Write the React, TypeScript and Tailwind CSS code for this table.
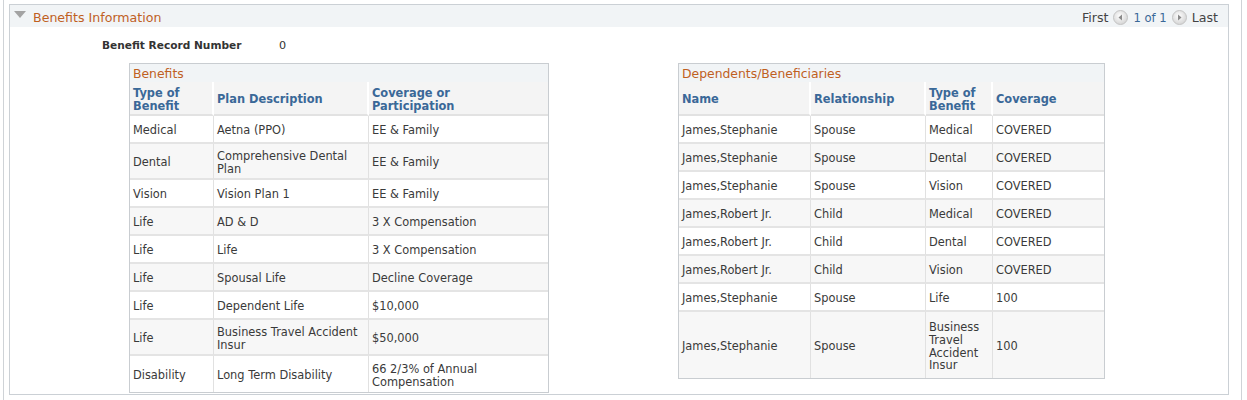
import React from 'react';

const font = { fontFamily: '"DejaVu Sans", Verdana, sans-serif' };

type Row = { h: number; cells: string[] };

const benefitRows: Row[] = [
  { h: 28, cells: ['Medical', 'Aetna (PPO)', 'EE & Family'] },
  { h: 36, cells: ['Dental', 'Comprehensive Dental Plan', 'EE & Family'] },
  { h: 28, cells: ['Vision', 'Vision Plan 1', 'EE & Family'] },
  { h: 28, cells: ['Life', 'AD & D', '3 X Compensation'] },
  { h: 28, cells: ['Life', 'Life', '3 X Compensation'] },
  { h: 28, cells: ['Life', 'Spousal Life', 'Decline Coverage'] },
  { h: 28, cells: ['Life', 'Dependent Life', '$10,000'] },
  { h: 36, cells: ['Life', 'Business Travel Accident Insur', '$50,000'] },
  { h: 36, cells: ['Disability', 'Long Term Disability', '66 2/3% of Annual Compensation'] },
];

const dependentRows: Row[] = [
  { h: 28, cells: ['James,Stephanie', 'Spouse', 'Medical', 'COVERED'] },
  { h: 28, cells: ['James,Stephanie', 'Spouse', 'Dental', 'COVERED'] },
  { h: 28, cells: ['James,Stephanie', 'Spouse', 'Vision', 'COVERED'] },
  { h: 28, cells: ['James,Robert Jr.', 'Child', 'Medical', 'COVERED'] },
  { h: 28, cells: ['James,Robert Jr.', 'Child', 'Dental', 'COVERED'] },
  { h: 28, cells: ['James,Robert Jr.', 'Child', 'Vision', 'COVERED'] },
  { h: 28, cells: ['James,Stephanie', 'Spouse', 'Life', '100'] },
  { h: 66, cells: ['James,Stephanie', 'Spouse', 'Business Travel Accident Insur', '100'] },
];

function NavButton({ dir }: { dir: 'left' | 'right' }) {
  return (
    <svg width="15" height="15" viewBox="0 0 15 15" className="mx-[5px] mt-[-3px]">
      <defs>
        <radialGradient id={`g-${dir}`} cx="45%" cy="40%" r="60%">
          <stop offset="0%" stopColor="#ffffff" />
          <stop offset="100%" stopColor="#d4d4d4" />
        </radialGradient>
      </defs>
      <circle cx="7.5" cy="7.5" r="7" fill={`url(#g-${dir})`} stroke="#c4c4c4" />
      {dir === 'left' ? (
        <path d="M9 4.5 L5.5 7.5 L9 10.5 Z" fill="#8a8a8a" />
      ) : (
        <path d="M6 4.5 L9.5 7.5 L6 10.5 Z" fill="#8a8a8a" />
      )}
    </svg>
  );
}

function DataGrid({
  title,
  cols,
  headers,
  rows,
  width,
}: {
  title: string;
  cols: string;
  headers: string[];
  rows: Row[];
  width: string;
}) {
  const n = headers.length;
  return (
    <div className={`${width} border border-[#c9cdd1] bg-white`}>
      <div className="h-[18px] bg-[#f1f4f6] px-[3px] pt-[1px] text-[12.4px] leading-[18px] text-[#c0601f]">{title}</div>
      <div className={`grid ${cols}`}>
        {headers.map((h, i) => (
          <div
            key={h}
            className={`flex h-[34px] items-center whitespace-pre-line border-b-2 border-b-[#e2e2e2] bg-[#f4f4f4] px-[3px] pt-[3px] text-[11.4px] font-bold leading-[13px] text-[#3a6898] ${
              i < n - 1 ? 'border-r-2 border-r-[#ffffff]' : ''
            }`}
          >
            {h}
          </div>
        ))}
        {rows.map((r, ri) =>
          r.cells.map((c, ci) => (
            <div
              key={`${ri}-${ci}`}
              style={{ height: r.h }}
              className={`flex items-center px-[3px] pt-[3px] text-[11.4px] leading-[12.8px] text-[#3a3a3a] ${
                ri % 2 === 1 ? 'bg-[#f7f7f7]' : 'bg-white'
              } ${ri < rows.length - 1 ? 'border-b-2 border-b-[#e4e4e4]' : ''} ${
                ci < n - 1 ? 'border-r border-r-[#e1e1e1]' : ''
              }`}
            >
              {c}
            </div>
          )),
        )}
      </div>
    </div>
  );
}

export default function App() {
  return (
    <div className="h-[400px] w-[1247px] bg-white" style={font}>
      <div className="ml-[3px] h-full w-[1239px] border-x border-[#cfd3d7] pl-[5px] pt-[4px]">
        <div className="h-[391px] w-[1220px] border border-[#cbd0d5]">
          <div className="flex h-[22px] items-center justify-between bg-[#f1f4f6] pt-[5px]">
            <div className="flex items-center">
              <svg width="12" height="7" viewBox="0 0 12 7" className="ml-[4px] mr-[7px] mt-[-8px]">
                <path d="M0 0 L12 0 L6 7 Z" fill="#a3a3a3" />
              </svg>
              <span className="text-[12.6px] text-[#c0601f]">Benefits Information</span>
            </div>
            <div className="mr-[10px] flex items-center text-[12.6px] text-[#444444]">
              <span>First</span>
              <NavButton dir="left" />
              <span className="text-[11.6px] text-[#3a6898]">1 of 1</span>
              <NavButton dir="right" />
              <span>Last</span>
            </div>
          </div>
          <div className="pt-[12px]">
            <div className="flex h-[14px] items-center">
              <span className="ml-[92px] w-[177px] text-[10.6px] font-bold text-[#333333]">Benefit Record Number</span>
              <span className="text-[11.2px] text-[#333333]">0</span>
            </div>
            <div className="mt-[10px] flex items-start">
              <div className="ml-[119px]">
                <DataGrid
                  title="Benefits"
                  width="w-[420px]"
                  cols="grid-cols-[84px_155px_179px]"
                  headers={['Type of Benefit', 'Plan Description', 'Coverage or\nParticipation']}
                  rows={benefitRows}
                />
              </div>
              <div className="ml-[129px]">
                <DataGrid
                  title="Dependents/Beneficiaries"
                  width="w-[427px]"
                  cols="grid-cols-[132px_115px_67px_111px]"
                  headers={['Name', 'Relationship', 'Type of Benefit', 'Coverage']}
                  rows={dependentRows}
                />
              </div>
            </div>
          </div>
        </div>
      </div>
    </div>
  );
}
